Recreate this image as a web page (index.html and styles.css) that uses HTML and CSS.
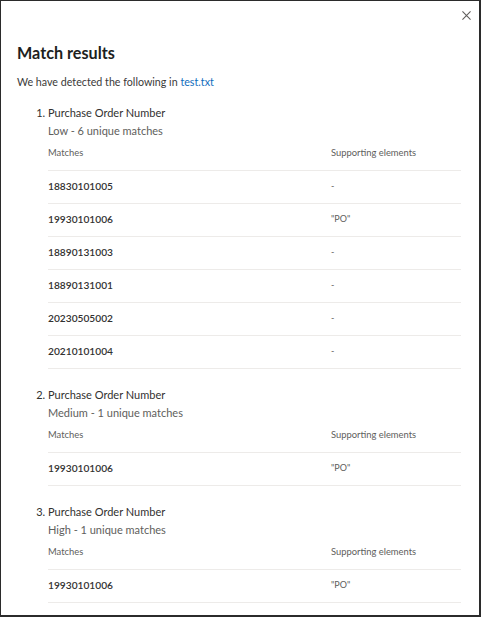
FILE: index.html
```html
<!DOCTYPE html>
<html lang="en">
<head>
<meta charset="utf-8">
<title>Match results</title>
<link rel="stylesheet" href="styles.css">
</head>
<body>
<div class="panel">
  <div class="topbar">
    <button class="close" aria-label="Close">
      <svg width="9" height="9" viewBox="0 0 10 10"><path d="M0.5 0.5 L9.5 9.5 M9.5 0.5 L0.5 9.5" stroke="#605e5c" stroke-width="1.2" fill="none"/></svg>
    </button>
  </div>
  <div class="content">
    <h1 class="title">Match results</h1>
    <p class="intro">We have detected the following in <a class="link" href="#">test.txt</a></p>
    <ol class="results">
      <li class="item">
        <div class="item-title">Purchase Order Number</div>
        <div class="item-sub">Low - 6 unique matches</div>
        <div class="table">
          <div class="row head"><span>Matches</span><span>Supporting elements</span></div>
          <div class="row"><span class="num">18830101005</span><span class="sup">-</span></div>
          <div class="row"><span class="num">19930101006</span><span class="sup">"PO"</span></div>
          <div class="row"><span class="num">18890131003</span><span class="sup">-</span></div>
          <div class="row"><span class="num">18890131001</span><span class="sup">-</span></div>
          <div class="row"><span class="num">20230505002</span><span class="sup">-</span></div>
          <div class="row"><span class="num">20210101004</span><span class="sup">-</span></div>
        </div>
      </li>
      <li class="item">
        <div class="item-title">Purchase Order Number</div>
        <div class="item-sub">Medium - 1 unique matches</div>
        <div class="table">
          <div class="row head"><span>Matches</span><span>Supporting elements</span></div>
          <div class="row"><span class="num">19930101006</span><span class="sup">"PO"</span></div>
        </div>
      </li>
      <li class="item">
        <div class="item-title">Purchase Order Number</div>
        <div class="item-sub">High - 1 unique matches</div>
        <div class="table">
          <div class="row head"><span>Matches</span><span>Supporting elements</span></div>
          <div class="row"><span class="num">19930101006</span><span class="sup">"PO"</span></div>
        </div>
      </li>
    </ol>
  </div>
</div>
</body>
</html>
```
FILE: styles.css
```css
html, body {
  margin: 0;
  padding: 0;
  background: #ffffff;
}
body {
  font-family: Lato, "Open Sans", sans-serif;
  color: #323130;
}
.panel {
  width: 481px;
  height: 617px;
  box-sizing: border-box;
  border-style: solid;
  border-color: #2b2b2b;
  border-width: 1px 2px 2px 1px;
  overflow: hidden;
  background: #fff;
}
.topbar {
  height: 39px;
  display: flex;
  justify-content: flex-end;
  align-items: flex-start;
  padding-right: 7px;
}
.close {
  margin-top: 9px;
  width: 11px;
  height: 11px;
  padding: 1px;
  border: 0;
  background: transparent;
  display: flex;
  align-items: center;
  justify-content: center;
}
.content {
  padding: 0 18px 0 16px;
}
.title {
  margin: 0;
  font-size: 16.2px;
  line-height: 26px;
  font-weight: 700;
  color: #201f1e;
}
.intro {
  margin: 7px 0 0;
  font-size: 10.7px;
  line-height: 18px;
  color: #3b3a39;
}
.link {
  color: #0f6cbd;
  text-decoration: none;
}
.results {
  margin: 13px 0 0;
  padding-left: 31px;
}
.item {
  font-size: 11px;
  line-height: 18px;
}
.item + .item {
  margin-top: 17px;
}
.item::marker {
  color: #323130;
}
.item-title {
  color: #323130;
}
.item-sub {
  color: #605e5c;
}
.row {
  display: grid;
  grid-template-columns: 283px 1fr;
  align-items: center;
  border-bottom: 1px solid #edebe9;
  padding: 7px 0 9px;
  line-height: 16px;
}
.row.head {
  padding: 6px 0 10px;
  line-height: 14px;
  font-size: 9.4px;
  color: #605e5c;
}
.num {
  font-size: 10.2px;
  font-weight: 600;
  color: #323130;
}
.sup {
  font-size: 9px;
  color: #605e5c;
}
```
